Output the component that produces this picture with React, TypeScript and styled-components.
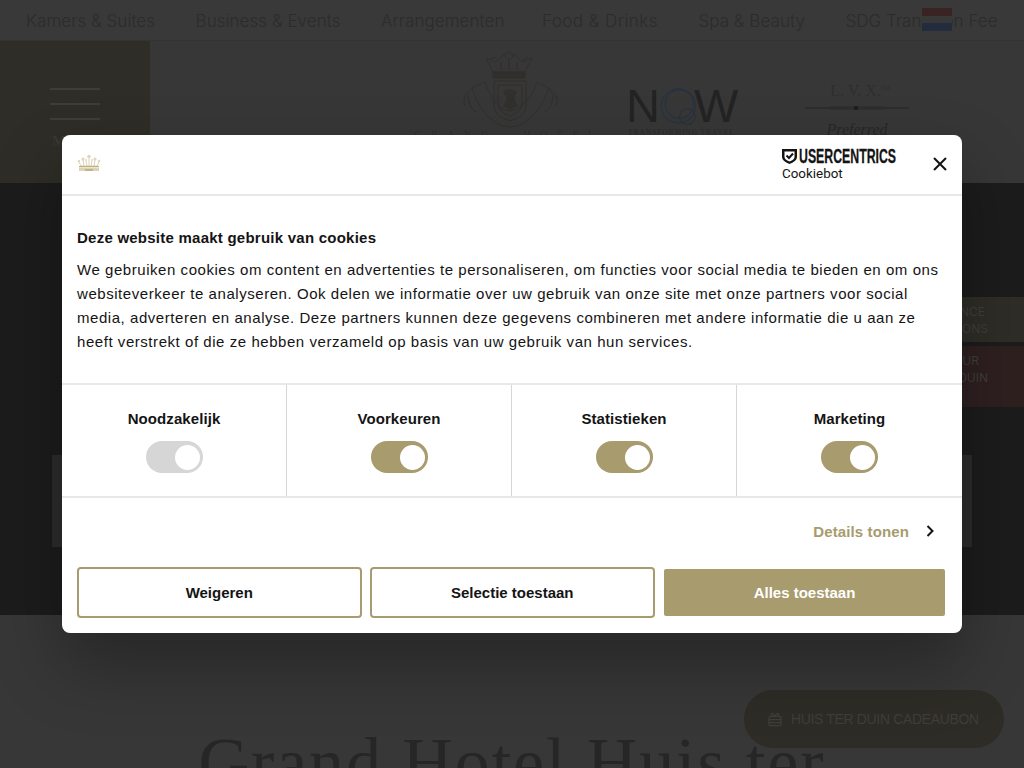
import React from "react";
import styled, { createGlobalStyle } from "styled-components";

const Global = createGlobalStyle`
  html, body { margin: 0; padding: 0; background: #373737; }
  body { width: 1024px; height: 768px; overflow: hidden; font-family: "Liberation Sans", Arial, sans-serif; }
  * { box-sizing: border-box; }
`;

const Page = styled.div`
  width: 1024px;
  height: 768px;
  overflow: hidden;
  position: relative;
  background: #373737;
`;

const TopNav = styled.nav`
  height: 41px;
  background: #393939;
  border-bottom: 1px solid #333;
  display: flex;
  align-items: center;
  padding-left: 26px;
  gap: 40.5px;
  position: relative;
`;

const NavLink = styled.span<{ $wide?: boolean }>`
  font-family: "Inter", "Liberation Sans", sans-serif;
  font-weight: 300;
  font-size: 17.1px;
  letter-spacing: ${(p) => (p.$wide ? "0.4px" : "0")};
  margin-left: ${(p) => (p.$wide ? "-3px" : "0")};
  color: #2c2c2a;
  white-space: nowrap;
`;

const Flag = styled.div`
  position: absolute;
  left: 922px;
  top: 8px;
  width: 30px;
  height: 23px;
  display: flex;
  flex-direction: column;
`;

const FlagBand = styled.div<{ $c: string }>`
  flex: 1;
  background: ${(p) => p.$c};
`;

const Header = styled.header`
  height: 142px;
  background: #373737;
  display: flex;
  position: relative;
  overflow: hidden;
`;

const MenuBox = styled.div`
  width: 150px;
  background: #2e2d27;
  padding: 47px 50px 0;
  display: flex;
  flex-direction: column;
  gap: 13px;
`;

const MenuBar = styled.div`
  height: 2px;
  width: 50px;
  background: #3d3d3b;
`;

const MenuLabel = styled.div`
  font-family: "Liberation Serif", serif;
  font-weight: 700;
  font-size: 15px;
  color: #383835;
  text-align: center;
  margin-top: 0;
`;

const Logos = styled.div`
  flex: 1;
  display: flex;
  align-items: flex-start;
  padding-left: 270px;
`;

const Crest = styled.div`
  width: 178px;
  padding-top: 9px;
  text-align: center;
  display: flex;
  flex-direction: column;
  align-items: center;
`;

const CrestText = styled.div`
  font-family: "Liberation Serif", serif;
  font-size: 10px;
  letter-spacing: 9.5px;
  word-spacing: 14px;
  color: #2e2e2e;
  margin-top: -1px;
  white-space: nowrap;
`;

const NowLogo = styled.div`
  margin-left: 30px;
  width: 112px;
  padding-top: 45px;
  display: flex;
  flex-direction: column;
`;

const NowWord = styled.div`
  display: flex;
  align-items: center;
  height: 40px;
  font-family: "Liberation Sans", sans-serif;
  font-size: 47px;
  color: #232323;
  line-height: 40px;
  margin-left: -2px;
`;

const NowO = styled.svg`
  flex: none;
  margin: 0 -3px;
  overflow: visible;
`;

const NowTag = styled.div`
  font-family: "Liberation Serif", serif;
  font-size: 7.5px;
  line-height: 9px;
  letter-spacing: 0.9px;
  color: #2a2a2a;
  white-space: nowrap;
  margin-top: 2px;
`;

const Lvx = styled.div`
  margin-left: 64px;
  width: 106px;
  padding-top: 40px;
  display: flex;
  flex-direction: column;
  align-items: center;
`;

const LvxTitle = styled.div`
  font-family: "Liberation Serif", serif;
  font-size: 16px;
  line-height: 20px;
  color: #2e2e2e;
  white-space: nowrap;
  margin-bottom: 4px;
  padding-left: 6px;
`;

const LvxTm = styled.sup`
  font-size: 6px;
  line-height: 0;
`;

const LvxScript = styled.div`
  font-family: "Liberation Serif", serif;
  font-style: italic;
  font-size: 16px;
  line-height: 17px;
  color: #272727;
  margin-top: 10px;
`;

const Hero = styled.section`
  height: 432px;
  background: #1c1c1c;
  padding: 272px 52px 0;
  position: relative;
`;

const Band = styled.div`
  height: 92px;
  background: #2c2c2c;
`;

const SideTab = styled.div<{ $top: number; $h: number; $bg: string }>`
  position: absolute;
  right: 0;
  top: ${(p) => p.$top}px;
  width: 124px;
  height: ${(p) => p.$h}px;
  background: ${(p) => p.$bg};
  padding: 6px 36px 0 0;
  text-align: right;
  font-family: "Inter", "Liberation Sans", sans-serif;
  font-size: 12px;
  line-height: 17px;
  color: #3f3e3b;
`;

const TabLine = styled.div<{ $inset?: number }>`
  margin-right: ${(p) => p.$inset ?? 0}px;
  white-space: nowrap;
`;

const Lower = styled.section`
  display: flex;
  justify-content: center;
  padding-top: 109px;
`;

const Title = styled.h1`
  margin: 0;
  width: 660px;
  text-align: center;
  font-family: "Liberation Serif", serif;
  font-weight: 400;
  font-size: 70px;
  letter-spacing: 1.9px;
  line-height: 78px;
  color: #262626;
`;

const Gift = styled.div`
  position: absolute;
  left: 744px;
  top: 690px;
  width: 260px;
  height: 58px;
  border-radius: 29px;
  background: #2e2c26;
  display: flex;
  align-items: center;
  padding-left: 23px;
  gap: 8px;
  color: #3f3e39;
`;

const GiftText = styled.span`
  font-family: "Liberation Sans", sans-serif;
  font-size: 14px;
  letter-spacing: -0.35px;
  white-space: nowrap;
`;

const Dialog = styled.div`
  position: absolute;
  left: 62px;
  top: 135px;
  width: 900px;
  height: 498px;
  background: #fff;
  border-radius: 8px;
  box-shadow: 0 32px 68px rgba(0, 0, 0, 0.3);
  color: #141414;
  display: flex;
  flex-direction: column;
  overflow: hidden;
`;

const DialogHead = styled.div`
  height: 61px;
  border-bottom: 2px solid #e8e8e8;
  display: flex;
  align-items: center;
  padding: 0 14px 2px 15px;
`;

const BrandBox = styled.div`
  margin-left: auto;
  margin-right: 36px;
  width: 114px;
  display: flex;
  flex-direction: column;
  margin-top: 3px;
`;

const BrandTop = styled.div`
  display: flex;
  align-items: center;
  gap: 2px;
  height: 16px;
`;

const BrandShield = styled.svg`
  flex: none;
`;

const BrandWordBox = styled.div`
  width: 97px;
  flex: none;
`;

const BrandWord = styled.div`
  font-family: "Liberation Sans", sans-serif;
  font-weight: 700;
  font-size: 20.5px;
  line-height: 16px;
  transform: scaleX(0.6);
  transform-origin: left center;
  white-space: nowrap;
  color: #141414;
  -webkit-text-stroke: 0.3px #141414;
`;

const BrandSub = styled.span`
  font-family: "Roboto", sans-serif;
  font-size: 13.4px;
  line-height: 16px;
  margin-top: 2px;
  color: #141414;
`;

const CloseBtn = styled.svg`
  flex: none;
`;

const DialogBody = styled.div`
  height: 187px;
  padding: 33px 15px 0;
`;

const BodyTitle = styled.div`
  font-weight: 700;
  font-size: 15px;
  letter-spacing: 0.24px;
  line-height: 18px;
  margin-bottom: 11px;
`;

const BodyText = styled.p`
  margin: 0;
  font-size: 15px;
  line-height: 24px;
  letter-spacing: 0.55px;
  color: #141414;
  white-space: nowrap;
`;

const Cats = styled.div`
  height: 115px;
  border-top: 2px solid #e8e8e8;
  border-bottom: 2px solid #e8e8e8;
  display: grid;
  grid-template-columns: 225px 225px 225px 225px;
`;

const Cat = styled.div<{ $last?: boolean }>`
  border-right: ${(p) => (p.$last ? "none" : "1px solid #d6d6d6")};
  display: flex;
  flex-direction: column;
  align-items: center;
  padding-top: 25px;
`;

const CatLabel = styled.div`
  font-weight: 700;
  font-size: 15px;
  letter-spacing: 0.08px;
  line-height: 18px;
  margin-bottom: 13px;
`;

const Toggle = styled.div<{ $on: boolean }>`
  width: 57px;
  height: 32px;
  border-radius: 16px;
  background: ${(p) => (p.$on ? "#a89b6d" : "#d6d6d6")};
  display: flex;
  align-items: center;
  justify-content: flex-end;
  padding-right: 3px;
`;

const Knob = styled.div`
  width: 25px;
  height: 25px;
  border-radius: 50%;
  background: #fff;
`;

const DetailsRow = styled.div`
  height: 69px;
  display: flex;
  align-items: center;
  justify-content: flex-end;
  padding: 0 28px 3px 0;
  gap: 17px;
`;

const DetailsLink = styled.span`
  font-weight: 700;
  font-size: 15px;
  letter-spacing: 0.12px;
  color: #a89b6d;
`;

const Buttons = styled.div`
  display: flex;
  padding: 0 17px 0 15px;
  gap: 8.5px;
  align-items: center;
`;

const OutlineBtn = styled.button`
  width: 284.5px;
  height: 51px;
  background: #fff;
  border: 2px solid #a89b6d;
  border-radius: 4px;
  font-family: "Liberation Sans", sans-serif;
  font-weight: 700;
  font-size: 15px;
  color: #141414;
`;

const FillBtn = styled.button`
  width: 281px;
  height: 47px;
  margin-left: 1px;
  background: #a89b6d;
  border: none;
  border-radius: 2px;
  font-family: "Liberation Sans", sans-serif;
  font-weight: 700;
  font-size: 15px;
  color: #fff;
`;

const CrownIcon = () => (
  <svg width="24" height="18" viewBox="0 0 24 18" fill="none" style={{ marginTop: -2 }}>
    <g fill="#e0d8be">
      <circle cx="12" cy="2.5" r="1.8" />
      <circle cx="6" cy="5" r="1.6" />
      <circle cx="18" cy="5" r="1.6" />
      <circle cx="2" cy="7" r="1.2" />
      <circle cx="22" cy="7" r="1.2" />
      <circle cx="9" cy="6" r="1.2" fill="#ebe5d2" />
      <circle cx="15" cy="6" r="1.2" fill="#ebe5d2" />
    </g>
    <path d="M2 8 L4 12 H20 L22 8 M6 6 L7 12 M18 6 L17 12 M12 4 V12 M9 7 L10 12 M15 7 L14 12" stroke="#d8cdac" strokeWidth="0.9" />
    <rect x="2" y="12" width="20" height="1.2" fill="#bfb084" />
    <rect x="2" y="13.6" width="20" height="3.4" fill="#ddd4b8" />
    <rect x="8" y="15" width="8" height="2" fill="#c2b48a" />
  </svg>
);

const CrestIcon = () => (
  <svg width="104" height="80" viewBox="0 0 104 80" fill="none" stroke="#302f2b" strokeWidth="1">
    <path d="M36 22 L29 8 L39 12 L45 6 L52 2 L59 6 L65 12 L75 8 L68 22 Z" />
    <path d="M33 9 L39 7 M47 5 L50 9 M57 5 L54 9 M71 7 L66 10 M44 12 V20 M52 8 V20 M60 12 V20" />
    <path d="M36 22 H68 V28 H36 Z" fill="#302f2b" />
    <path d="M37 31 H69 V56 Q69 66 53 71 Q37 66 37 56 Z" />
    <path d="M41 35 H65 V54 Q65 62 53 66 Q41 62 41 54 Z" />
    <path d="M46 42 Q52 36 60 42 L57 48 L61 56 L53 60 L46 56 L50 48 Z" fill="#31302c" stroke="none" />
    <path d="M15 38 L28 32 Q34 50 44 58 Q52 64 62 58 Q74 50 80 32 L92 38 Q84 62 68 72 Q53 82 38 72 Q22 62 15 38 Z" />
    <path d="M15 38 Q9 44 12 52 Q14 60 20 62 M10 42 Q5 50 8 56 M92 38 Q98 44 95 52 Q93 60 87 62 M97 42 Q102 50 99 56" />
  </svg>
);

const LvxRule = () => (
  <svg width="106" height="6" viewBox="0 0 106 6">
    <path d="M1 3 H105" stroke="#242424" strokeWidth="1" />
    <path d="M26 1.5 H80 M26 4.5 H80" stroke="#2e2e2e" strokeWidth="0.6" />
    <rect x="50" y="1" width="4" height="4" fill="#1f1f1f" />
  </svg>
);

const ShieldIcon = () => (
  <BrandShield width="15" height="16" viewBox="0 0 15 16" fill="none">
    <path d="M0 1 H15 V9 Q15 13 7.5 16 Q0 13 0 9 Z" fill="#141414" />
    <path d="M2.5 3.5 H12.5 V9 Q12.5 11.5 7.5 13.5 Q2.5 11.5 2.5 9 Z" fill="#fff" />
    <path d="M4.5 7.5 L7 10 L11 5.5" stroke="#141414" strokeWidth="2" />
  </BrandShield>
);

const cats: [string, boolean][] = [
  ["Noodzakelijk", false],
  ["Voorkeuren", true],
  ["Statistieken", true],
  ["Marketing", true],
];

const nav = ["Kamers & Suites", "Business & Events", "Arrangementen", "Food & Drinks", "Spa & Beauty", "SDG Transition Fee"];

export default function App() {
  return (
    <Page>
      <Global />
      <TopNav>
        {nav.map((n) => (
          <NavLink key={n} $wide={n === "Food & Drinks"}>{n}</NavLink>
        ))}
        <Flag>
          <FlagBand $c="#3a2323" />
          <FlagBand $c="#383838" />
          <FlagBand $c="#232c3c" />
        </Flag>
      </TopNav>
      <Header>
        <MenuBox>
          <MenuBar />
          <MenuBar />
          <MenuBar />
          <MenuLabel>MENU</MenuLabel>
        </MenuBox>
        <Logos>
          <Crest>
            <CrestIcon />
            <CrestText>GRAND HOTEL</CrestText>
          </Crest>
          <NowLogo>
            <NowWord>
              N
              <NowO width="40" height="40" viewBox="0 0 41 40" fill="none" stroke="#28323f" strokeWidth="1.2">
                <circle cx="22" cy="20" r="17.5" />
                <circle cx="23" cy="18" r="14.5" />
                <circle cx="31" cy="31" r="8" />
              </NowO>
              W
            </NowWord>
            <NowTag>TRANSFORMING TRAVEL</NowTag>
          </NowLogo>
          <Lvx>
            <LvxTitle>
              L. V. X.<LvxTm>TM</LvxTm>
            </LvxTitle>
            <LvxRule />
            <LvxScript>Preferred</LvxScript>
          </Lvx>
        </Logos>
      </Header>
      <Hero>
        <Band />
        <SideTab $top={114} $h={45} $bg="#2e2d27">
          <TabLine $inset={3}>ADVANCE</TabLine>
          <TabLine>OPTIONS</TabLine>
        </SideTab>
        <SideTab $top={163} $h={61} $bg="#2f2020">
          <TabLine $inset={9}>TOUR</TabLine>
          <TabLine>TER DUIN</TabLine>
        </SideTab>
      </Hero>
      <Lower>
        <Title>Grand Hotel Huis ter Duin</Title>
      </Lower>
      <Gift>
        <svg width="16" height="16" viewBox="0 0 24 24" fill="none" stroke="#3f3e39" strokeWidth="2">
          <rect x="3" y="8" width="18" height="14" rx="2" />
          <path d="M3 13 H21 M3 17.5 H21 M12 8 C9 2 5 3 7 7 M12 8 C15 2 19 3 17 7" />
        </svg>
        <GiftText>HUIS TER DUIN CADEAUBON</GiftText>
      </Gift>
      <Dialog>
        <DialogHead>
          <CrownIcon />
          <BrandBox>
            <BrandTop>
              <ShieldIcon />
              <BrandWordBox>
                <BrandWord>USERCENTRICS</BrandWord>
              </BrandWordBox>
            </BrandTop>
            <BrandSub>Cookiebot</BrandSub>
          </BrandBox>
          <CloseBtn width="16" height="16" viewBox="0 0 16 16" fill="none" stroke="#141414" strokeWidth="2">
            <path d="M2 2 L14 14 M14 2 L2 14" />
          </CloseBtn>
        </DialogHead>
        <DialogBody>
          <BodyTitle>Deze website maakt gebruik van cookies</BodyTitle>
          <BodyText>
            We gebruiken cookies om content en advertenties te personaliseren, om functies voor social media te bieden en om ons
            <br />
            websiteverkeer te analyseren. Ook delen we informatie over uw gebruik van onze site met onze partners voor social
            <br />
            media, adverteren en analyse. Deze partners kunnen deze gegevens combineren met andere informatie die u aan ze
            <br />
            heeft verstrekt of die ze hebben verzameld op basis van uw gebruik van hun services.
          </BodyText>
        </DialogBody>
        <Cats>
          {cats.map(([label, on], i) => (
            <Cat key={label} $last={i === 3}>
              <CatLabel>{label}</CatLabel>
              <Toggle $on={on}>
                <Knob />
              </Toggle>
            </Cat>
          ))}
        </Cats>
        <DetailsRow>
          <DetailsLink>Details tonen</DetailsLink>
          <svg width="8" height="12" viewBox="0 0 8 12" fill="none" stroke="#141414" strokeWidth="2">
            <path d="M1.5 1 L6.5 6 L1.5 11" />
          </svg>
        </DetailsRow>
        <Buttons>
          <OutlineBtn>Weigeren</OutlineBtn>
          <OutlineBtn>Selectie toestaan</OutlineBtn>
          <FillBtn>Alles toestaan</FillBtn>
        </Buttons>
      </Dialog>
    </Page>
  );
}
